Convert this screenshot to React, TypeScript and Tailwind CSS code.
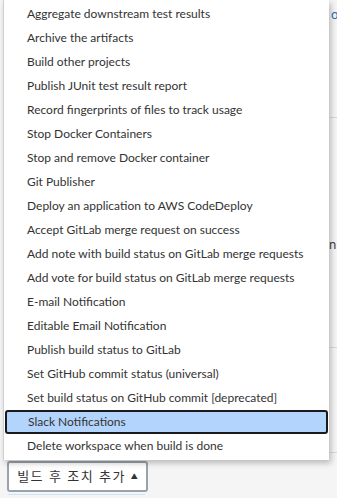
import { useState } from "react";

const items = [
  "Aggregate downstream test results",
  "Archive the artifacts",
  "Build other projects",
  "Publish JUnit test result report",
  "Record fingerprints of files to track usage",
  "Stop Docker Containers",
  "Stop and remove Docker container",
  "Git Publisher",
  "Deploy an application to AWS CodeDeploy",
  "Accept GitLab merge request on success",
  "Add note with build status on GitLab merge requests",
  "Add vote for build status on GitLab merge requests",
  "E-mail Notification",
  "Editable Email Notification",
  "Publish build status to GitLab",
  "Set GitHub commit status (universal)",
  "Set build status on GitHub commit [deprecated]",
  "Slack Notifications",
  "Delete workspace when build is done",
];

export default function App() {
  const [selected, setSelected] = useState("Slack Notifications");

  return (
    <div
      className="relative w-[337px] h-[498px] overflow-hidden bg-[#f5f5f5] text-[#333]"
      style={{ fontFamily: 'Lato, "Noto Sans CJK KR", sans-serif' }}
    >
      {/* 뒤쪽 페이지 내용 */}
      <div className="flex flex-col">
        <div className="h-[117px] pt-[5px] pl-[331px] text-[13px] text-[#2a6ebb]">o</div>
        <div className="ml-[330px] h-px bg-[#d8d8d8]" />
        <div className="h-[118px]" />
        <div className="pl-[329px] text-[13px] leading-[16px] text-[#444]">n</div>
        <div className="h-[95px]" />
        <div className="ml-[330px] h-px bg-[#d8d8d8]" />
        <div className="h-[104px]" />
        <div className="ml-[330px] h-px bg-[#d8d8d8]" />
        <div className="pl-[7px] pt-[8px]">
          <button className="h-[31px] w-[141px] flex items-center justify-center gap-[5px] rounded-[3px] border-2 border-[#9aa3ab] bg-white text-[13px] text-[#333] tracking-[1.5px]">
            빌드 후 조치 추가
            <span className="text-[7px] tracking-normal">▲</span>
          </button>
        </div>
        <div className="ml-[8px] mt-[2px] h-px w-[137px] bg-[#cfe3f7]" />
      </div>

      {/* 드롭다운 메뉴 */}
      <div className="absolute left-[3px] top-0 w-[326px] bg-white pb-[2px] pt-[2px] shadow-[2px_3px_6px_rgba(0,0,0,0.25)] border-l border-[#d0d0d0]">
        {items.map((item) => (
          <div
            key={item}
            onClick={() => setSelected(item)}
            className={
              item === selected
                ? "h-6 mx-[1px] pl-[21px] flex items-center rounded-[3px] border-2 border-[#1a1a1a] bg-[#b3d4fc] text-[12px]"
                : "h-6 pl-[23px] flex items-center text-[12px]"
            }
          >
            {item}
          </div>
        ))}
      </div>
    </div>
  );
}
